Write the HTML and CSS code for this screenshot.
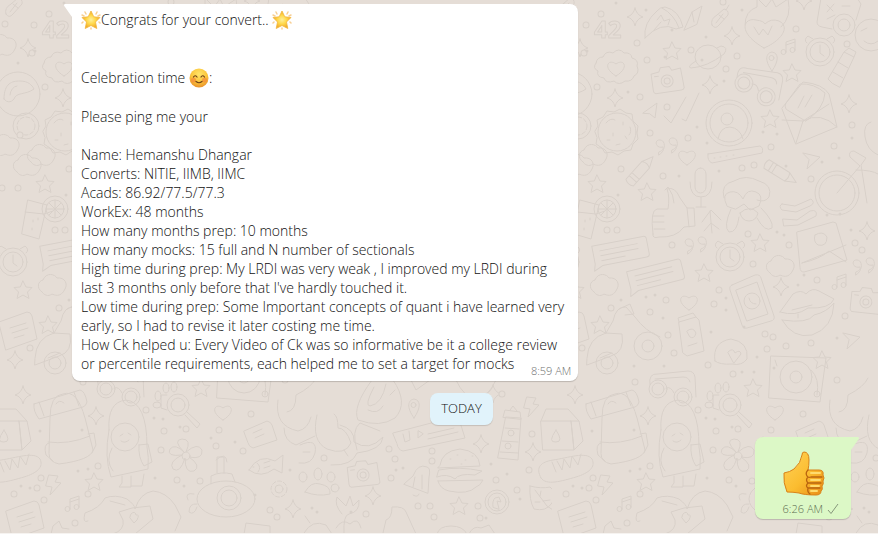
FILE: index.html
```html
<!DOCTYPE html>
<html lang="en">
<head>
    <meta charset="UTF-8">
    <meta name="viewport" content="width=device-width, initial-scale=1.0">
    <title>Chat</title>
    <link rel="stylesheet" href="styles.css">
</head>
<body>
    <!-- Doodle wallpaper, one 552px wide tile repeated -->
    <svg class="wallpaper" aria-hidden="true">
        <defs>
            <path id="star" d="M0-9l3 6 6 .5-4.500 4.500 1.500 6.500L0 5-6 8.500-4.500 2-9-2.500-3-3z"/>
            <path id="spark" d="M0-9q1.500 7 8 9-6.500 1.500-8 9-1.500-7.500-8-9 6.500-2 8-9z"/>
            <path id="heart" d="M0 8C-14 0-8-10 0-4 8-10 14 0 0 8z"/>
            <path id="cloud" d="M-11 7c-6-4-4-11 1-12 3-8 12-6 14-2 8-1 11 6 8 11-4 9-11 6-13 5-4 3-8 1-10-2z"/>
            <path id="note" d="M-4 5V-5l9-3V3M-4-2l9-3M-4 5a2.500 2.500 0 1 1-5 0 2.500 2.500 0 0 1 5 0zM5 3A2.500 2.500 0 1 1 0 3a2.500 2.500 0 0 1 5 0z"/>
            <path id="dart" d="M-8-7L9-3-4 9-2 0z"/>
            <path id="bolt" d="M-5-10L4-9 1-3l6 1L-4 10l2-8-6-1z"/>
            <path id="quotes" d="M-7 4c5-2 4-4 4-5-8 2-9-8-3-7 6 0 6 11-1 15zM6 2c5-2 4-4 4-5C2-1 1-11 7-10c6 0 6 11-1 15z"/>
            <path id="pin" d="M0 10C-8-1-6-8 0-9c7 1 7 9 0 19zM2-3a2.500 2.500 0 1 1-5 0 2.500 2.500 0 0 1 5 0z"/>
            <path id="chili" d="M-9 7q-2-6 5-10L3-9q5 1 4 6L-2 7q-4 5-7 0zM5-8l3-5M-5 5l7-9M-2-3l5 4"/>
            <g id="camera">
                <path d="M-15-8l8-1 2-4h9l2 4 9-1 1 20q-1 2-3 2h-26q-2-1-2-3z"/>
                <circle cy="1" r="6"/><circle cy="1" r="3"/><path d="M-12-5h4"/>
            </g>
            <g id="clock">
                <circle r="14"/><circle r="10"/>
                <path d="M0-7v8l4 3M-13-9q-4-3 1-7l5 3M7-13l5-3q5 4 1 7"/>
            </g>
            <g id="crayon">
                <path d="M-17-5h24l11 5L7 5h-24q-3-5 0-10zM-12-5V5M-8-5V5M7-5q3 5 0 10"/>
            </g>
            <g id="chat">
                <path d="M-27-9h52q3 0 3 3v15q0 3-3 3h-45l-9 4 2-7zM-20-3h38M-20 2h38M-20 7h24"/>
            </g>
            <g id="letter">
                <path d="M-19-8L9-18q4 0 5 4l5 23-31 11zM-8-2l16-5M-6 3l16-5M-4 8l10-3"/>
            </g>
            <g id="glasses">
                <circle cx="-12" cy="2" r="9"/><circle cx="-12" cy="2" r="6"/>
                <circle cx="13" cy="10" r="9"/><circle cx="13" cy="10" r="6"/>
                <path d="M-4 1q5-2 8 5M-20-2q-2-12 8-11l30-3q6 0 7 6l1 20M-15-8l28-2q6 0 7 5"/>
            </g>
            <g id="milk">
                <path d="M-19-9l5-12h22l11 12M-19-9h30l3 29h-31zM11-9l3 29 9-9-4-20-8 0M-4 0q-9 13 0 12 8 0 0-12z"/>
            </g>
            <g id="bread">
                <path d="M-25 10c-6-11 0-16 12-18C2-10 20-17 26-9c4 8-3 14-16 18-14 4-30 9-35 1zM-14-6l4 10M-9-7l5 9 2-11 6 9 2-12 6 9 3-11"/>
            </g>
            <g id="globe"><circle r="22"/><path d="M-14 5c0-16 8-18 16-18 8 0 12 4 14 8-8 6-18 3-20 10q-5 6-10 0zM-8 1q1-8 7-9"/></g>
            <path id="rings" d="M49 14h0M32 53h0M85 43h0M95 60h0M174 69h0M139 50h0M185 56h0M244 29h0M171 2h0M45 87h0M88 97h0M115 107h0M98 133h0M136 138h0M69 169h0M111 176h0M190 168h0M202 165h0M219 147h0M282 146h0M300 125h0M259 179h0M295 44h0M55 230h0M65 230h0M120 245h0M196 234h0M237 245h0M303 243h0M310 250h0M201 264h0M265 280h0M59 308h0M114 300h0M98 312h0M167 290h0M162 304h0M116 335h0M122 353h0M213 334h0M221 337h0M215 349h0M234 346h0M259 343h0M293 316h0M156 365h0M181 374h0M285 380h0M83 382h0M146 410h0M164 431h0M186 429h0M161 450h0M219 430h0M216 446h0M243 451h0M177 480h0M200 481h0M251 414h0M41 478h0M37 488h0M88 494h0M14 494h0M44 500h0M75 523h0M270 510h0M277 517h0M98 466h0M324 458h0M389 449h0M395 459h0M432 461h0M432 451h0M391 478h0M496 480h0M517 490h0M418 506h0M430 506h0M478 506h0M434 517h0M502 394h0M532 434h0M529 470h0M480 518h0M366 514h0M2 188h0M18 188h0M20 135h0M5 24h0M34 25h0M30 348h0"/>
            <pattern id="doodles" width="552" height="534" patternUnits="userSpaceOnUse">
                <g class="doodle">
                    <text x="42" y="38" class="doodle-number">42</text>
                    <path d="M93 38q-2-15 12-27 3-4 8-4 14 3 18 20l-7 2q-15-8-31 9zM110 8q12 6 17 20M105 20l4-5 3 6 6-2-2 6M102 30l7-8"/>
                    <path d="M132 30l8-18 10-6-5 18zM140 12l2 10"/>
                    <path d="M193 25q0-14 12-18V-2l9 9 6-8 4 8 12-8q4 18-7 28M212 48c-28-16-20-31-8-28q8 1 9 4 6-6 14-3c12 6 2 20-15 27zM202 27l5 8 4-6 5 6 4-9"/>
                    <path d="M269-2l-4 24q0 4 5 5l10 2M305-2l4 6-5 16M275 5l6 6M282 4l-7 8M290 6h8M283 15l-8 4"/>
                    <circle cx="292" cy="25" r="11"/><circle cx="292" cy="25" r="6"/>
                    <circle cx="319" cy="35" r="16"/><path d="M309 31l6-3M312 41q7 6 14 0"/>
                    <ellipse cx="156" cy="57" rx="13" ry="12"/><path d="M144 61q-10 6-5 7 16-1 33-14 5-7-3-8l-4 2"/>
                    <path d="M44 63q1-6 7-6 3-7 10-4 6-6 11 0 7-1 8 5 7 2 5 8 3 7-3 10-2 6-9 5-6 5-11 0-8 3-10-3-8-1-6-7-6-3-2-8z"/>
                    <path d="M280 83l-4-4 16-27 10 5-14 30zM292 52l5-4 7 4-2 5M286 62l10 6M281 72l10 6"/>
                    <path d="M230 108l21-26q20 2 26 12l8 33-41 17zM234 109q-2-3 0-6l14-19q14-1 25 9-1 16-19 28zM230 120l21 1 26-17M251 121l-7 22M251 121q18-10 34 6M246 108l6-12M253 107l7-12"/>
                    <circle cx="177" cy="123" r="23"/><circle cx="177" cy="123" r="19"/><circle cx="175" cy="119" r="6"/><path d="M166 139q2-12 12-12 10 1 13 12"/>
                    <circle cx="65" cy="132" r="19"/>
                    <path d="M43 131l3-5-1-6 6-3 4-6 7 1 6-3 6 4 6 1 1 7 5 5-1 7 1 6-5 5-2 6-7 1-6 4-6-3-7 1-3-5-6-4 1-6zM54 123q5-6 9-3M71 122v3M61 133v3M73 136l2 3M55 140h3M64 145l4-1M78 127q2 5-1 8"/>
                    <path d="M91 113l14-10-2 15-5-4zM112 116l7 7 15-26M130 119l4 2 13-28"/>
                    <path d="M156 154l52-8q4 2 2 7l-50 10q-5-2-4-9zM162 158h1M168 157h1M174 156h1M181 155h1"/>
                    <rect x="143" y="168" width="11" height="25" rx="6"/><path d="M138 182q0 15 11 15t11-15M149 197v10M144 207h10M113 190l3-3q6 8 6 16"/>
                    <circle cx="285" cy="193" r="22"/><circle cx="285" cy="193" r="18"/>
                    <path d="M285 193l23-27-10-9q-2-6 4-6l12 7-5 7 6 38M304 170q16 0 22 4"/>
                    <path d="M319 122q-8 2-6 15t13 18"/>
                    <path d="M172 198q-4-14 10-17 12-7 25 0 14 4 10 16-4 6-12 3M175 206q-6-12 3-14 8-2 13 7 4-11 13-7 8 3 3 14l-9 4-6-6-8 5zM188 213q10-9 18 0-2 8-9 8t-9-8zM179 209q-8 18-2 23 8 1 10-15M209 208q13 13 11 20-7 5-15-10"/>
                    <path d="M101 234q-3-24 4-25h11q2-12-1-20 8-3 13 9l7 10h7l1 18-11 1q-8 11-25 10-7 2-6-3zM101 216h11M101 222h11M102 229h11M135 208l2 19"/>
                    <path d="M150 222l9-12 10 10M158 211l2 22M152 231l7-8 8 6"/>
                    <path d="M230 204l13 2 16-7q5 4-1 7l-14 6-14-2q-4-4 0-6zM231 219l14 1 13-9q8-2 6 5l-18 9-14 1z"/>
                    <path d="M28 200l19 5-8 34-17-5zM25 212l19 2 9-3M33 220v2M38 218v2M32 228v2"/>
                    <circle cx="55" cy="209" r="13"/><circle cx="55" cy="209" r="9"/><path d="M55 200v18M46 209h18M49 203l12 12M61 203l-12 12"/>
                    <path d="M245 232l36-10 3 1 11 37-43 12q-4 0-4-4zM250 263l44-18M250 263q18-4 27-12l17 11M263 235q8-5 12 2 0 10-9 8-5-3-3-10z"/>
                    <path d="M180 285l23-10q5-1 6 3l13 38q1 4-3 5l-24 7q-4 1-5-3l-12-35q-1-4 2-5zM184 290l21-8 11 32-21 7z"/>
                    <circle cx="200" cy="301" r="8"/><path d="M197 298q1 6 7 6"/>
                    <path d="M228 312l13-18q8-5 13 0 6-7 13-3l15 8q-4 10-26 9-12 9-28 4zM230 320q26 4 32-5 13-3 20-12-1 25-22 32-19 4-30-15zM240 310l20-5M246 318v-4"/>
                    <path d="M127 322l17-5 3 3 5 31-17 5-4-3zM127 322l-1-4 15-5 3 4M135 331q6-5 9 2-2 7-6 4zM136 346l9-3"/>
                    <path d="M35 358q1-20 19-25l16 1q3 18-11 22l-24 9zM54 333l7-12q3-15 13-14l9 10q10 14 25 20M67 309l11-5 4 10-9 1M48 358l12-5"/>
                    <circle cx="55" cy="363" r="11"/><circle cx="55" cy="363" r="6"/><circle cx="96" cy="346" r="14"/><circle cx="96" cy="346" r="6"/>
                    <path d="M163 361q-3-19 16-22 18 3 16 20-5 7-15 5-12 1-17-3zM176 352q5-5 7 1 5-4 6 1l-7 9z"/>
                    <path d="M219 356l55 2-6 44-51-4zM223 360l2 6M259 370q9 8 6 25"/>
                    <circle cx="244" cy="377" r="16"/><circle cx="244" cy="377" r="6"/><circle cx="265" cy="394" r="3"/>
                    <circle cx="178" cy="405" r="11"/><circle cx="178" cy="405" r="7"/><path d="M187 412l13 12-3 4-12-13M167 395h-6v13l6 2"/>
                    <ellipse cx="158" cy="396" rx="3" ry="5"/><ellipse cx="166" cy="388" rx="3" ry="5"/><ellipse cx="174" cy="387" rx="3" ry="5"/><ellipse cx="157" cy="405" rx="4" ry="3"/>
                    <path d="M34 404l46-14q5 1 7 12-1 4-4 5l-44 12q-6-8-5-15zM39 402l5 14M74 392l5 14M50 418q0-23 13-24 14-5 22 24l8 32q-2 10-34 14-10-2-10-10zM48 442q20 3 42-6M56 404q3-5 8-1M49 443q-6 1-3 12l7 6M88 434l6-1 2 12-4 8"/>
                    <path d="M109 430q-2-28 17-30 21 2 21 47 2 10 1 22l-37 8q-7-20-2-47zM112 448q-7 13 1 23M139 445l9-1 4 18-8 4q-6-9-5-21zM122 476v7l-3 4h12v-11M131 486h11l2-12"/>
                    <circle cx="125" cy="437" r="14"/><path d="M120 436l3-2M128 433l3 2M121 441q4 3 8-1"/>
                    <path d="M184 452q-12-12-2-13 10 0 4 13 12-10 16-2 1 10-13 7 13 9 5 14-9 3-9-13-5 16-12 11-5-7 9-14-16 2-12-6 5-6 14 3z"/><circle cx="186" cy="456" r="4"/>
                    <path d="M88 521q-6 3-3-8 15-5 20-15 10-4 22 1 8 6 8 10 5-16 18-18 13 1 22 14l6 12-6 14M110 501l15 4M113 534q12-4 10-14l-4-8 13-4 18-2 3 13-18 15M131 514q4-4 5 1 4-1 1 5l-3 3-4-5z"/>
                    <ellipse cx="226" cy="499" rx="29" ry="18"/><circle cx="229" cy="498" r="12"/><circle cx="229" cy="498" r="8"/><path d="M211 484v-8q10-5 21-2l3 8M217 473v-16h7v16M216 460q10-9 11 2M197 504q-8-1-8 8 5 4 8-5M194 494q-10-2-6 6"/>
                    <path d="M249 470q10-17 26-9l8-6-1 18-8-4q-13 10-25 1zM257 463q5 4 1 9M253 467h1M264 463l6-2M264 468l6-2"/>
                    <path d="M244 431l23-10q4 1 5 4l5 15-24 8q-4-1-5-5zM253 433l9-4M255 438l9-4"/>
                    <circle cx="279" cy="489" r="4"/><circle cx="279" cy="489" r="8" stroke-dasharray="4 2"/>
                    <path d="M278 400q-4 26 20 31 10-2 13-14M287 412q9-1 9-17 16-8 20-17M284 428q0 13 12 17l19-9"/>
                    <path d="M317 415q-6 26 10 34 18 7 24-6-5-15-13-15 0-12-4-14M340 425q15 4 14 17 15 10 29-5-1 13-26 16-5 13-26 12M300 445q18-8 15 8-3 12-16 10M303 452h7M344 450l4 6M357 450q-6-20 3-27l20 8"/>
                    <path d="M372 380q-20 27-14 40 22 8 37-2 14-15-2-38M374 387q-10 19-4 19 12-2 16-22M368 410q10 5 15-4M395 390l-5 5"/>
                    <path d="M393 433l65-17 7 22-62 13q-5-1-6-7zM403 434l2 8 5-2-1-9M418 431v7l5-4zM428 434l26-6M428 439l30-7"/>
                    <path d="M440 465q2-14 20-16 19 2 20 17l-42 2zM439 470q20-4 43 1l-7 4q-16-2-20 4-8-6-18-2zM438 481l45-1q-3 6-7 7-8 8-27 4-9-2-11-10zM450 459h1M457 455h1M465 460h1M472 456h1M461 464h1"/>
                    <path d="M506 417l15 1-3 42-20-2zM503 417l2-7 15 2 1 7zM510 410l3-4 4 5M505 428l14 1M502 441l16 1M500 452l18 1"/>
                    <circle cx="511" cy="433" r="3"/><circle cx="508" cy="446" r="3"/>
                    <path d="M404 484l9-8q5-13 14-9 4 1 2 10l-1 16zM413 495q5 3 6-1M415 477l-2 10M422 475v14"/>
                    <path d="M305 492q6-11 15-8 11 2 10 10-12 3-25-2z"/><ellipse cx="303" cy="477" rx="4" ry="5"/><ellipse cx="318" cy="474" rx="4" ry="6"/><ellipse cx="331" cy="477" rx="4" ry="5"/><ellipse cx="335" cy="488" rx="4" ry="4"/>
                    <path d="M342 514q-8-9-5-17l9 9 4-10 3 10 6-6q1 12-10 14-6 1-5 20M336 528q6-10 14-4 8-8 11 4M304 533q8-14 22-8l6 9M310 523l-5-7M383 533l3-13q6-2 6-13 12-1 14 5l10 22"/>
                    <circle cx="497" cy="502" r="12"/><circle cx="497" cy="502" r="9"/><path d="M493 507q-1-6 2-9l4-1 2 5-4-1 2 8z"/>
                    <path d="M530 486q11 3 20 1 8 6 2 16-6 9-18 6-5-9-4-23zM535 490l12 16 6 4M540 496l1-5M543 501l7-1M540 502l-5 0"/>
                    <path d="M437 534q2-8 14-8t16 8M469 534q4-9 12-6l8-3 6 9M411 380l5 10 14-10M456 380q8 18 20 18t20-18M244 534l2-11 24 3v8M51 534l2-8 6-5 3 7 7 1"/>
                    <use href="#spark" x="83" y="17"/><use href="#spark" x="180" y="36"/><use href="#spark" x="252" y="1"/><use href="#spark" x="158" y="85"/><use href="#spark" x="63" y="98"/><use href="#spark" x="297" y="104"/>
                    <use href="#spark" x="28" y="48"/><use href="#spark" x="315" y="231"/><use href="#spark" x="229" y="287"/><use href="#spark" x="15" y="360"/><use href="#spark" x="96" y="416"/><use href="#spark" x="23" y="395"/><use href="#spark" x="293" y="509"/>
                    <use href="#spark" x="481" y="444"/><use href="#spark" x="533" y="452"/><use href="#spark" x="373" y="496"/><use href="#spark" x="493" y="394"/>
                    <use href="#star" x="120" y="51"/><use href="#star" x="240" y="73"/><use href="#star" x="218" y="119"/><use href="#star" x="45" y="184"/><use href="#star" x="95" y="192"/><use href="#star" x="208" y="243"/><use href="#star" x="152" y="273"/>
                    <use href="#star" x="48" y="325"/><use href="#star" x="23" y="290"/><use href="#star" x="270" y="360"/><use href="#star" x="201" y="388"/><use href="#star" x="94" y="482"/><use href="#star" x="459" y="506"/>
                    <use href="#heart" x="64" y="68"/><use href="#heart" x="135" y="157"/><use href="#heart" x="137" y="302"/><use href="#heart" x="223" y="412"/>
                    <use href="#note" x="238" y="47"/><use href="#note" x="289" y="282"/><use href="#note" x="74" y="504"/>
                    <use href="#dart" x="259" y="160"/><use href="#dart" x="299" y="340"/><use href="#bolt" x="54" y="485"/><use href="#bolt" x="532" y="407"/>
                    <use href="#quotes" x="114" y="148"/><use href="#quotes" x="143" y="247"/><use href="#quotes" x="311" y="268"/>
                    <use href="#pin" x="220" y="61"/><use href="#pin" x="414" y="408"/><use href="#chili" x="169" y="18"/><use href="#chili" x="15" y="7"/>
                    <use href="#cloud" x="53" y="285"/><use href="#cloud" x="229" y="266"/><use href="#cloud" x="3" y="45"/><use href="#cloud" x="28" y="165"/><use href="#cloud" x="42" y="155"/><use href="#cloud" x="6" y="145"/>
                    <use href="#camera" transform="translate(115 80) rotate(-8)"/><use href="#camera" transform="translate(314 301) rotate(6)"/><use href="#camera" transform="translate(363 474) rotate(-6)"/>
                    <use href="#clock" x="268" y="52"/><use href="#clock" x="178" y="257"/><use href="#clock" x="13" y="262"/>
                    <use href="#crayon" transform="translate(89 170) rotate(-48)"/><use href="#crayon" transform="translate(229 173) rotate(32)"/>
                    <use href="#chat" transform="translate(68 250) rotate(-11)"/><use href="#chat" transform="translate(103 274) rotate(-14)"/>
                    <use href="#letter" x="25" y="519"/><use href="#letter" x="577" y="519"/><use href="#letter" x="18" y="330"/>
                    <use href="#glasses" transform="translate(204 84) rotate(14)"/><use href="#glasses" x="118" y="387"/>
                    <use href="#milk" x="8" y="430"/><use href="#milk" x="560" y="430"/><use href="#bread" x="14" y="468"/><use href="#bread" x="566" y="468"/>
                    <use href="#globe" x="18" y="94"/><circle cx="26" cy="126" r="13"/><circle cx="26" cy="126" r="9" stroke-dasharray="4 2"/>
                </g>
                <!-- small rings between the doodles -->
                <use href="#rings" class="ring"/>
                <use href="#rings" class="ring-hole"/>
                <path class="speck" d="M64 3h0M120 30h0M154 37h0M113 57h0M76 92h0M150 60h0M172 81h0M145 127h0M155 143h0M211 132h0M225 134h0M270 162h0M287 158h0M300 138h0M94 10h0M190 10h0M234 166h0M66 195h0M127 176h0M167 171h0M225 232h0M232 235h0M275 215h0M288 214h0M299 230h0M69 300h0M94 297h0M103 295h0M111 318h0M174 298h0M174 310h0M159 332h0M192 327h0M252 275h0M246 285h0M285 338h0M205 357h0M82 366h0M112 366h0M190 372h0M202 372h0M222 368h0M154 418h0M163 419h0M180 427h0M211 438h0M235 442h0M82 430h0M40 431h0M155 478h0M184 486h0M21 486h0M30 488h0M78 471h0M88 469h0M255 495h0M290 470h0M396 470h0M403 468h0M491 464h0M507 474h0M520 499h0M351 512h0M312 508h0M317 512h0M486 518h0M18 63h0M35 51h0"/>
            </pattern>
        </defs>
        <rect width="100%" height="100%" fill="url(#doodles)"/>
    </svg>

    <main class="chat">
        <div class="message message-in">
            <svg class="tail tail-in" viewBox="0 0 8 13" aria-hidden="true"><path d="M8 13V0H1Q-1 1 1 3z"/></svg>
            <p class="message-text"><svg class="emoji" viewBox="0 0 20 20" role="img" aria-label="glowing star"><use href="#glow-star"/></svg>Congrats for your convert.. <svg class="emoji" viewBox="0 0 20 20" role="img" aria-label="glowing star"><use href="#glow-star"/></svg><br>
                <br>
                <br>
                Celebration time <svg class="emoji" viewBox="0 0 20 20" role="img" aria-label="smiling face">
                    <defs>
                        <radialGradient id="face" cx=".5" cy=".3" r=".7">
                            <stop offset="0" stop-color="#ffe56a"/>
                            <stop offset=".6" stop-color="#fbc53a"/>
                            <stop offset="1" stop-color="#e8902a"/>
                        </radialGradient>
                    </defs>
                    <circle cx="10" cy="10" r="9.500" fill="url(#face)"/>
                    <circle cx="4.500" cy="12" r="2.500" fill="#f4803c" opacity=".6"/>
                    <circle cx="15.500" cy="12" r="2.500" fill="#f4803c" opacity=".6"/>
                    <path d="M4.500 9q1.500-2.500 3.500 0M12 9q1.500-2.500 3.500 0M7 13.500q3 2.500 6 0" fill="none" stroke="#6e4018" stroke-width="1.200" stroke-linecap="round"/>
                </svg>:<br>
                <br>
                Please ping me your<br>
                <br>
                Name: Hemanshu Dhangar<br>
                Converts: NITIE, IIMB, IIMC<br>
                Acads: 86.92/77.5/77.3<br>
                WorkEx: 48 months<br>
                How many months prep: 10 months<br>
                How many mocks: 15 full and N number of sectionals<br>
                High time during prep: My LRDI was very weak , I improved my LRDI during last 3 months only before that I've hardly touched it.<br>
                Low time during prep: Some Important concepts of quant i have learned very early, so I had to revise it later costing me time.<br>
                How Ck helped u: Every Video of Ck was so informative be it a college review or percentile requirements, each helped me to set a target for mocks
                <span class="time">8:59 AM</span></p>
        </div>

        <div class="day">TODAY</div>

        <div class="message message-out">
            <svg class="tail tail-out" viewBox="0 0 8 13" aria-hidden="true"><path d="M0 13V0h7q2 1 0 3z"/></svg>
            <svg class="emoji-large" viewBox="0 0 44 46" role="img" aria-label="thumbs up">
                <defs>
                    <linearGradient id="skin" x1="0" y1="0" x2="1" y2="1">
                        <stop offset="0" stop-color="#ffd25a"/>
                        <stop offset=".55" stop-color="#fbbd30"/>
                        <stop offset="1" stop-color="#e88b16"/>
                    </linearGradient>
                </defs>
                <path d="M1 23q6-1 10-4 7-6 8-14 0-3 2-3 5 0 5 8 0 6-1 10h11q5 0 4 5 2 3 0 6 1 3-1 5 1 4-1 5 0 4-5 4-12 0-17-2-6-1-12-1-4-9-3-19z" fill="url(#skin)" stroke="#d98218"/>
                <path d="M25 20q-3 3-1 6 1 2 4 1h11M25 27q-3 3 0 6h13M25 33q-3 3 0 5h12M25 38q-1 4 2 6" fill="none" stroke="#b9640f" stroke-width="1.300" stroke-linecap="round"/>
                <path d="M28 23h9M28 30h9M28 36h8M28 41h6" fill="none" stroke="#ffdb6e" stroke-width="2" stroke-linecap="round"/>
            </svg>
            <span class="time">6:26 AM
                <svg class="check" viewBox="0 0 12 12" role="img" aria-label="sent"><path d="M1 7l3 3.500L11 1"/></svg>
            </span>
        </div>
    </main>

    <svg class="symbols" aria-hidden="true">
        <defs>
            <radialGradient id="gold">
                <stop offset="0" stop-color="#fff09a"/>
                <stop offset=".5" stop-color="#ffd84a"/>
                <stop offset="1" stop-color="#f0a628"/>
            </radialGradient>
        </defs>
        <symbol id="glow-star" viewBox="0 0 20 20">
            <path d="M4 2l1 2M16 2l-1 2M1 13l1-1M19 13l-1-1M10 19v-1M1 5l2 1M19 5l-2 1" fill="none" stroke="#f7cf94" stroke-width="1.500" stroke-linecap="round"/>
            <path d="M10 1l2.800 5.800 6.200.7-4.500 4.500 1.300 6.500L10 15.500 4.200 18.500 5.500 12 1 7.500l6.200-.7z" fill="url(#gold)" stroke="#f3b63c" stroke-width=".8" stroke-linejoin="round"/>
        </symbol>
    </svg>
</body>
</html>
```
FILE: styles.css
```css
:root {
    --wallpaper: #e5ddd6;
    --wallpaper-line: #d8d0c9;
    --bubble-in: #ffffff;
    --bubble-out: #dcf8c6;
    --day: #e1f3fb;
    --text-primary: #101010;
    --text-muted: #707070;
    --text-sent: #5c6e52;
}

* {
    box-sizing: border-box;
    margin: 0;
    padding: 0;
}

body {
    font-family: 'Open Sans', 'Noto Sans', sans-serif;
    font-size: 14px;
    font-weight: 300;
    line-height: 19px;
    background-color: var(--wallpaper);
    color: var(--text-primary);
    min-height: 100vh;
    border-bottom: 1px solid #f6f3f0;
}

.wallpaper {
    position: absolute;
    top: 0;
    left: 0;
    width: 100%;
    height: calc(100% - 1px);
    z-index: -1;
}

.doodle {
    fill: none;
    stroke: var(--wallpaper-line);
    stroke-width: 1;
    stroke-linejoin: round;
    stroke-linecap: round;
}

.doodle-number {
    font-size: 24px;
    font-weight: bold;
}

.ring {
    fill: none;
    stroke: var(--wallpaper-line);
    stroke-width: 7;
    stroke-linecap: round;
}

.ring-hole {
    fill: none;
    stroke: var(--wallpaper);
    stroke-width: 5;
    stroke-linecap: round;
}

.speck {
    fill: none;
    stroke: var(--wallpaper-line);
    stroke-width: 3;
    stroke-linecap: round;
}

.chat {
    display: flex;
    flex-direction: column;
    gap: 12px;
    padding: 4px 27px 14px 72px;
}

.message {
    position: relative;
    display: flex;
    flex-direction: column;
    max-width: 65%;
    border-radius: 8px;
    box-shadow: 0 1px 1px rgba(0, 0, 0, 0.18);
}

.message-in {
    align-self: flex-start;
    padding: 6px 7px 8px 9px;
    border-top-left-radius: 0;
    background-color: var(--bubble-in);
}

.message-out {
    align-self: flex-end;
    align-items: flex-end;
    padding: 13px 12px 0 28px;
    border-top-right-radius: 0;
    background-color: var(--bubble-out);
}

.tail {
    position: absolute;
    top: 0;
    width: 8px;
    height: 13px;
}

.tail-in {
    left: -8px;
    fill: var(--bubble-in);
}

.tail-out {
    right: -8px;
    fill: var(--bubble-out);
}

.emoji {
    width: 20px;
    height: 20px;
    vertical-align: -5px;
}

.emoji-large {
    width: 44px;
    height: 46px;
    align-self: flex-start;
}

.time {
    font-size: 11px;
    line-height: 15px;
    color: var(--text-muted);
}

.message-in .time {
    float: right;
    margin-top: 9px;
    margin-bottom: -5px;
}

.message-out .time {
    display: flex;
    align-items: center;
    gap: 4px;
    padding: 5px 0 3px;
    color: var(--text-sent);
}

.check {
    width: 12px;
    height: 12px;
    fill: none;
    stroke: #86977b;
    stroke-width: 1;
}

.day {
    align-self: center;
    padding: 6px 11px 7px;
    border-radius: 8px;
    background-color: var(--day);
    box-shadow: 0 1px 1px rgba(0, 0, 0, 0.14);
    font-size: 13px;
}

.symbols {
    position: absolute;
    width: 0;
    height: 0;
}
```
